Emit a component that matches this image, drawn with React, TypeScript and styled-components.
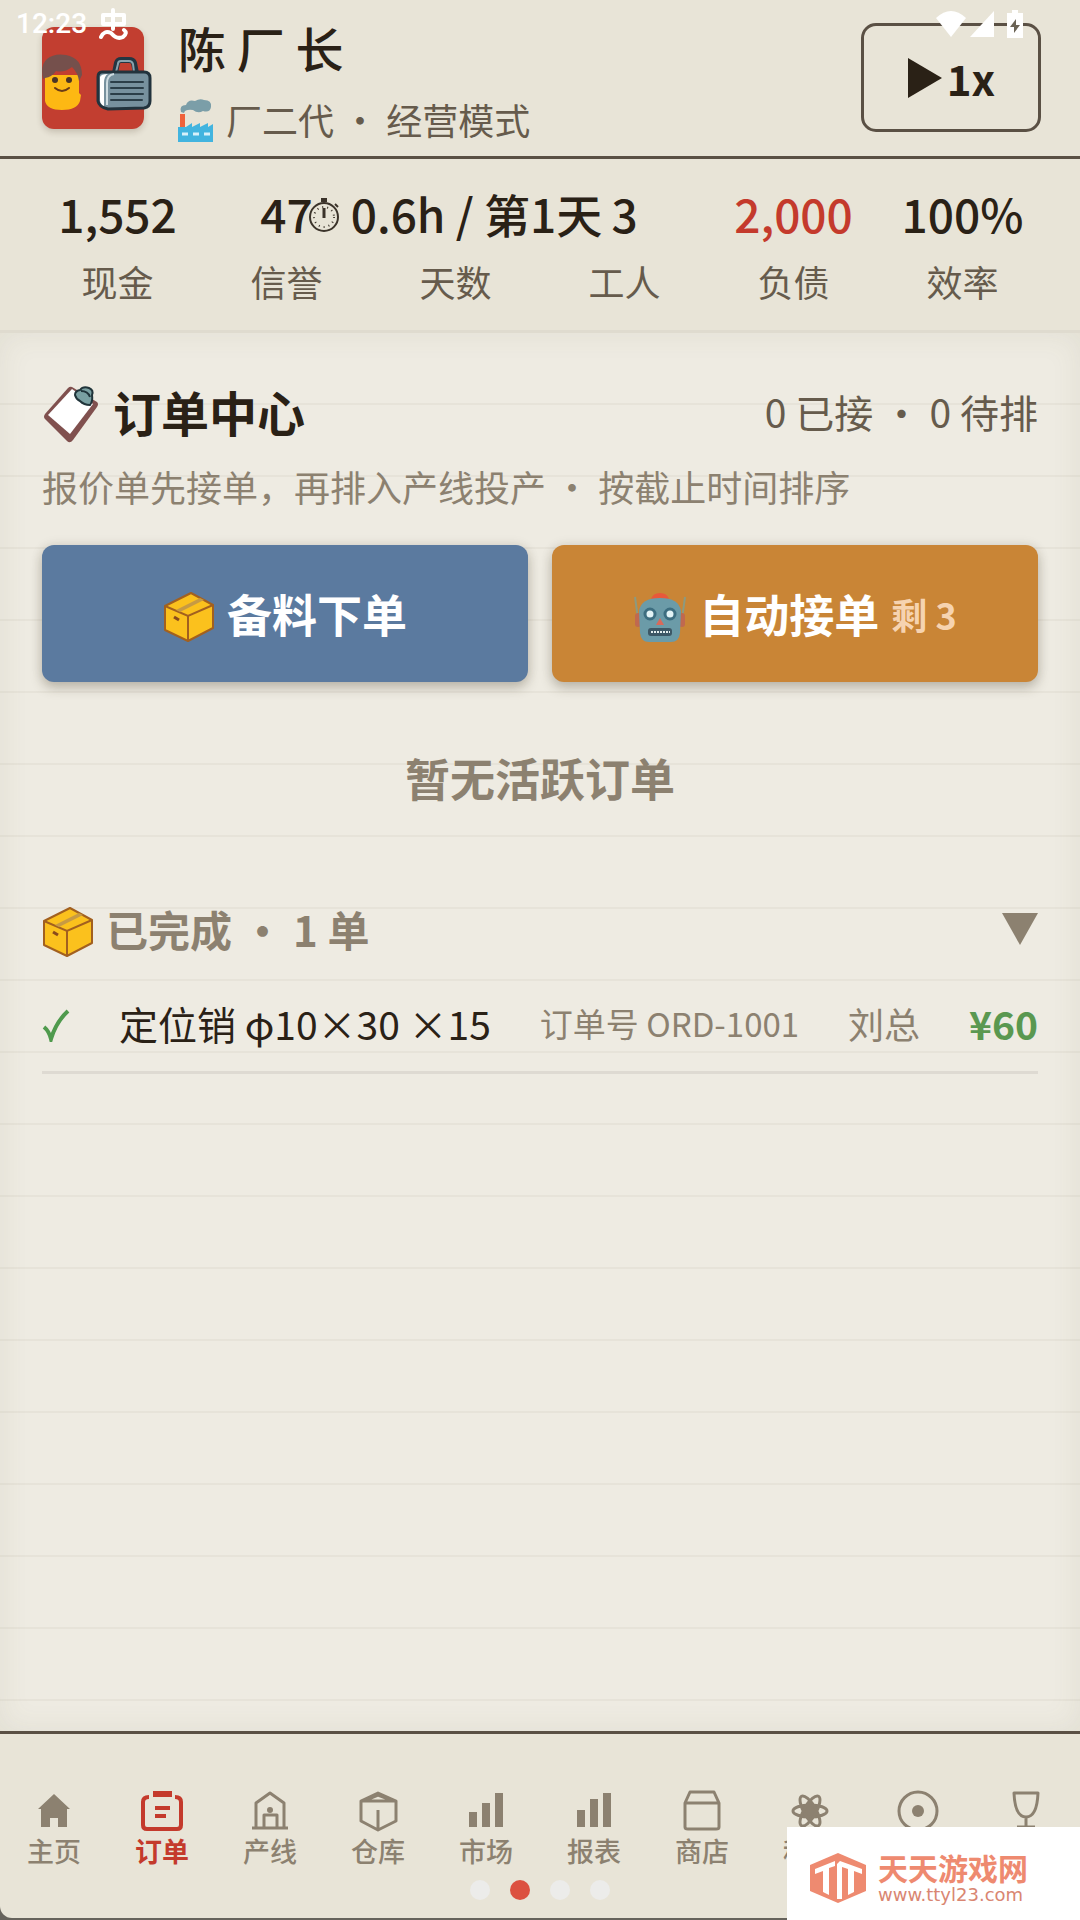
import React from "react";
import styled, { createGlobalStyle } from "styled-components";

const sans = '"Noto Sans CJK SC", "Noto Sans", sans-serif';
const ink = "#2a2116";
const inkSoft = "#665b4c";
const muted = "#8c8170";
const line = "#5a5044";
const red = "#c43a2c";

const GlobalStyle = createGlobalStyle`
  *, *::before, *::after { box-sizing: border-box; }
  body { margin: 0; background: #66635c; font-family: ${sans}; color: ${ink}; }
  button { font: inherit; color: inherit; background: none; border: 0; padding: 0; cursor: pointer; }
  h1, h2, p, ul { margin: 0; padding: 0; font-weight: inherit; }
  ul { list-style: none; }
  svg { display: block; flex: none; }
`;

const Page = styled.div`
  position: relative;
  display: flex;
  flex-direction: column;
  min-height: 100vh;
  padding-bottom: 2px;
  overflow: hidden;
`;

const StatusBar = styled.div`
  position: absolute;
  inset: 0 0 auto 0;
  z-index: 2;
  display: flex;
  align-items: center;
  justify-content: space-between;
  padding: 8px 48px 8px 16px;
  color: #fff;
  font: 500 28px/32px Roboto, sans-serif;
`;

const StatusGroup = styled.div<{ $gap: number }>`
  display: flex;
  align-items: center;
  gap: ${(p) => p.$gap}px;
`;

const Header = styled.header`
  display: flex;
  align-items: center;
  gap: 34px;
  padding: 12px 39px 13px 42px;
  background: #e8e4d7;
  border-bottom: 3px solid ${line};
`;

const Avatar = styled.div`
  display: flex;
  align-items: flex-end;
  gap: 14px;
  flex: none;
  width: 102px;
  height: 102px;
  padding-bottom: 18px;
  border-radius: 12px;
  background: #c23e30;
  box-shadow: 0 3px 6px rgba(60, 40, 20, 0.2);
`;

const Identity = styled.div`
  display: flex;
  flex-direction: column;
  gap: 13px;
  flex: 1;
`;

const PlayerName = styled.h1`
  font-size: 48px;
  line-height: 70px;
  font-weight: 500;
`;

const PlayerRole = styled.p`
  display: flex;
  align-items: center;
  gap: 12px;
  font-size: 36px;
  line-height: 48px;
  color: ${inkSoft};
`;

const SpeedButton = styled.button`
  display: flex;
  align-items: center;
  justify-content: center;
  gap: 4px;
  width: 180px;
  height: 109px;
  border: 3px solid ${line};
  border-radius: 15px;
  font-size: 42px;
  font-weight: 700;
  line-height: 48px;
`;

const Stats = styled.section`
  display: flex;
  padding: 22px 33px 27px;
  background: #e8e4d7;
  border-bottom: 3px solid #dfdbcf;
`;

const Stat = styled.div`
  display: flex;
  flex: 1 1 0;
  min-width: 0;
  flex-direction: column;
  align-items: center;
  gap: 14px;
  white-space: nowrap;
`;

const StatValue = styled.div<{ $danger?: boolean }>`
  display: flex;
  align-items: center;
  gap: 12px;
  font-size: 46px;
  line-height: 64px;
  font-weight: 500;
  color: ${(p) => (p.$danger ? red : ink)};
`;

const StatLabel = styled.div`
  font-size: 36px;
  line-height: 44px;
  color: ${inkSoft};
`;

const RuledPaper = styled.main`
  flex: 1;
  padding: 45px 42px;
  background-color: #eeebe2;
  background-image: linear-gradient(
    to bottom,
    transparent 70px,
    rgba(90, 80, 60, 0.05) 70px
  );
  background-size: 100% 72px;
  box-shadow: inset 0 0 30px rgba(100, 100, 50, 0.09);
`;

const TitleRow = styled.div`
  display: flex;
  align-items: center;
  justify-content: space-between;
  line-height: 60px;
`;

const Title = styled.h2`
  display: flex;
  align-items: center;
  gap: 13px;
  font-size: 48px;
  font-weight: 700;
`;

const Counts = styled.span`
  font-size: 39px;
  color: ${inkSoft};
`;

const Hint = styled.p`
  margin-top: 15px;
  font-size: 36px;
  line-height: 54px;
  color: ${muted};
`;

const Actions = styled.div`
  display: grid;
  grid-template-columns: 1fr 1fr;
  gap: 24px;
  margin-top: 32px;
`;

const ActionButton = styled.button<{ $color: string }>`
  display: flex;
  align-items: center;
  justify-content: center;
  gap: 12px;
  height: 137px;
  border-radius: 12px;
  background: ${(p) => p.$color};
  color: #fff;
  font-size: 45px;
  font-weight: 700;
  box-shadow: 0 6px 12px rgba(60, 50, 30, 0.25), 0 0 12px rgba(60, 50, 30, 0.1);
`;

const Remaining = styled.span`
  font-size: 36px;
  color: #f6d3b0;
`;

const Empty = styled.p`
  margin-top: 63px;
  font-size: 45px;
  line-height: 66px;
  font-weight: 700;
  text-align: center;
  color: ${muted};
`;

const DoneToggle = styled.button`
  display: flex;
  align-items: center;
  gap: 12px;
  width: 100%;
  margin-top: 88px;
  font-size: 42px;
  line-height: 60px;
  font-weight: 700;
  color: ${muted};

  & > svg:last-child { margin-left: auto; }
`;

const OrderList = styled.ul`
  margin-top: 20px;
`;

const OrderRow = styled.li`
  display: flex;
  align-items: center;
  justify-content: space-between;
  padding: 14px 0 18px;
  border-bottom: 3px solid #dedad2;
  line-height: 60px;
  white-space: nowrap;
`;

const OrderName = styled.span`
  font-size: 39px;
`;

const OrderMeta = styled.span<{ $size: number }>`
  font-size: ${(p) => p.$size}px;
  color: ${muted};
`;

const OrderPrice = styled.span`
  font-size: 39px;
  font-weight: 700;
  color: #5a9850;
`;

const Nav = styled.nav`
  display: flex;
  padding: 53px 0 49px;
  background: #e8e4d7;
  border-top: 3px solid ${line};
  border-radius: 0 0 12px 12px;
`;

const NavItem = styled.button<{ $active?: boolean }>`
  display: flex;
  flex: 1 1 0;
  flex-direction: column;
  align-items: center;
  height: 82px;
  font-size: 27px;
  line-height: 32px;
  font-weight: ${(p) => (p.$active ? 700 : 500)};
  color: ${(p) => (p.$active ? red : muted)};
`;

const Pager = styled.div`
  position: absolute;
  bottom: 20px;
  left: 50%;
  transform: translateX(-50%);
  display: flex;
  gap: 20px;
`;

const PagerDot = styled.span<{ $active?: boolean }>`
  width: 20px;
  height: 20px;
  border-radius: 50%;
  background: ${(p) => (p.$active ? "#dc5140" : "#ececea")};
`;

const SiteBadge = styled.a`
  position: absolute;
  right: 0;
  bottom: 0;
  display: flex;
  align-items: center;
  gap: 10px;
  width: 293px;
  height: 93px;
  padding-left: 21px;
  padding-top: 8px;
  background: #fff;
  color: #ee8a70;
  text-decoration: none;
`;

const SiteText = styled.span`
  display: flex;
  flex-direction: column;
`;

const SiteName = styled.span`
  font-size: 30px;
  line-height: 34px;
  font-weight: 700;
`;

const SiteUrl = styled.span`
  font: 18px/22px "DejaVu Sans", sans-serif;
  color: #d98672;
`;

const PersonEmoji = () => (
  <svg width="40" height="58" viewBox="0 0 40 58" aria-hidden="true">
    <path d="M3 30 V48 Q5 57 20 57 Q35 57 38 48 L39 42 L37 40 V22 H3Z" fill="#fdb813" />
    <path d="M1 26 Q-2 12 5 6 Q12 0 24 2 Q40 5 40 22 L37 28 Q36 20 30 14 Q22 20 14 18 Q10 24 3 25Z" fill="#75504c" />
    <circle cx="13" cy="27" r="3" fill="#4a3426" />
    <circle cx="27" cy="27" r="3" fill="#4a3426" />
    <path d="M13 35 Q20 41 27 35" fill="none" stroke="#6b3c17" strokeWidth="2" strokeLinecap="round" />
  </svg>
);

const CaseEmoji = () => (
  <svg width="56" height="54" viewBox="0 0 56 54" aria-hidden="true">
    <path d="M19 16 L21 6 Q22 3 25 3 H33 Q37 3 38 6 L40 16" fill="none" stroke="#243642" strokeWidth="6" />
    <path d="M20 15 L22 7 Q22 4 25 4 H33 Q36 4 37 7 L38 15" fill="none" stroke="#8aa3ae" strokeWidth="2" />
    <path d="M6 15 H48 Q54 15 54 21 V44 Q54 50 48 51 L12 52 Q3 50 2 44 V20 Q2 15 6 15Z" fill="#77919e" stroke="#22333d" strokeWidth="3" />
    <path d="M4 20 Q5 17 12 17 Q8 19 8 26 V49 Q4 47 4 43Z" fill="#fff" />
    <path d="M15 25 H47 M15 31 H47 M15 37 H47 M15 43 H46" stroke="#2b3e48" strokeWidth="2" strokeLinecap="round" />
    <path d="M11 48 V26 Q11 18 18 17" fill="none" stroke="#cfdde2" strokeWidth="2" />
  </svg>
);

const FactoryEmoji = () => (
  <svg width="36" height="48" viewBox="0 -4 36 48" aria-hidden="true">
    <path d="M3 13 Q1 6 8 6 Q10 0 17 2 Q22 -1 26 1 Q34 1 33 8 Q32 14 25 12 Q20 15 15 11 Q7 10 6 14Z" fill="#7b9ea8" />
    <rect x="2" y="15" width="5" height="14" fill="#f0623b" />
    <path d="M0 43 V28 H8 L14 24 V28 L22 24 V28 L30 24 V28 L35 25 V43Z" fill="#42b4df" />
    <path d="M4 35 H10 M15 35 H21 M26 35 H32" stroke="#d7f0fa" strokeWidth="3" />
  </svg>
);

const Stopwatch = () => (
  <svg width="30" height="40" viewBox="0 -4 30 40" aria-hidden="true" fill="none" stroke="#3b332a" strokeWidth="2">
    <circle cx="15" cy="20" r="14" />
    <circle cx="15" cy="20" r="10" strokeDasharray="1 4" />
    <path d="M12 3 H18" strokeWidth="4" />
    <path d="M26 7 L29 10" />
    <path d="M15 11 V21" strokeWidth="3" />
  </svg>
);

const ClipboardEmoji = () => (
  <svg width="58" height="66" viewBox="0 -8 58 66" aria-hidden="true">
    <path d="M30 1 L55 16 Q57 18 55 21 L31 54 Q28 58 25 55 L3 33 Q1 31 3 28 L26 2 Q28 0 30 1Z" fill="#80504e" />
    <path d="M30 3 L51 18 L28 48 L6 29Z" fill="#fff" />
    <path d="M33 9 Q33 5 38 4 Q41 0 47 2 Q52 4 50 9 Q51 15 48 19 Q42 19 38 15 Q34 13 33 9Z" fill="#7aa0a2" stroke="#20343a" strokeWidth="2" />
    <path d="M39 5 Q46 5 48 11" fill="none" stroke="#20343a" strokeWidth="2" />
  </svg>
);

const BoxEmoji = () => (
  <svg width="52" height="58" viewBox="0 -6 52 58" aria-hidden="true">
    <path d="M2 15 L28 2 L50 14 V37 L25 50 L2 39Z" fill="#fbc11d" stroke="#a2601f" strokeWidth="2" strokeLinejoin="round" />
    <path d="M2 15 L25 25 L50 14 M25 25 V50" fill="none" stroke="#a2601f" strokeWidth="2" />
    <path d="M13 19 L37 7 L41 9 L17 21Z" fill="#c79a43" />
    <path d="M11 26 L16 29" stroke="#8a4a1c" strokeWidth="3" />
  </svg>
);

const RobotEmoji = () => (
  <svg width="54" height="58" viewBox="0 -6 54 58" aria-hidden="true">
    <path d="M2 6 L5 28 M52 6 L49 28" stroke="#8c9a80" strokeWidth="2" />
    <rect x="2" y="22" width="6" height="14" rx="3" fill="#c0694f" />
    <rect x="46" y="22" width="6" height="14" rx="3" fill="#c0694f" />
    <path d="M18 8 Q20 2 27 2 Q34 2 36 8Z" fill="#e8583b" />
    <path d="M6 20 Q8 7 27 7 Q46 7 48 20 L47 42 Q46 51 38 51 H16 Q8 51 7 42Z" fill="#6b9ba8" />
    <circle cx="17" cy="23" r="5" fill="#e2f3f5" stroke="#3d6e80" strokeWidth="3" />
    <circle cx="37" cy="23" r="5" fill="#e2f3f5" stroke="#3d6e80" strokeWidth="3" />
    <path d="M27 27 L31 34 H23Z" fill="#d9695a" />
    <rect x="15" y="37" width="24" height="8" rx="3" fill="#3c5866" />
    <path d="M18 41 H37" stroke="#e5f0f0" strokeWidth="2" strokeDasharray="2 1" />
  </svg>
);

const LineIcon = ({ children }: { children: React.ReactNode }) => (
  <svg width="48" height="48" viewBox="0 0 48 48" fill="none" stroke="currentColor" strokeWidth="3" strokeLinejoin="round" aria-hidden="true">
    {children}
  </svg>
);

type NavEntry = { id: string; label?: string; active?: boolean; icon: React.ReactNode };

const navEntries: NavEntry[] = [
  {
    id: "主页",
    label: "主页",
    icon: <path d="M24 7 L40 22 H37 V40 H28 V31 H20 V40 H11 V22 H8Z" fill="currentColor" stroke="none" />,
  },
  {
    id: "订单",
    label: "订单",
    active: true,
    icon: (
      <>
        <path d="M11 10 Q5 10 5 15 V38 Q5 42 9 42 H39 Q43 42 43 38 V15 Q43 10 37 10" strokeWidth="4" />
        <path d="M15 7 H34" strokeWidth="6" />
        <path d="M17 21 H32 M17 29 H28" strokeWidth="4" />
      </>
    ),
  },
  {
    id: "产线",
    label: "产线",
    icon: (
      <>
        <path d="M6 41 H42 M10 41 V16 L24 6 L38 16 V41 M18 41 V28 H31 V41" />
        <circle cx="24" cy="23" r="3" fill="currentColor" stroke="none" />
      </>
    ),
  },
  {
    id: "仓库",
    label: "仓库",
    icon: <path d="M24 6 L42 14 V34 L24 43 L7 34 V14Z M7 14 H42 M12 13 L24 8 L37 13 M24 23 V43" />,
  },
  {
    id: "市场",
    label: "市场",
    icon: <path d="M11 40 V25 M24 40 V16 M37 40 V6" strokeWidth="8" />,
  },
  {
    id: "报表",
    label: "报表",
    icon: <path d="M11 40 V23 M24 40 V12 M37 40 V6" strokeWidth="8" />,
  },
  {
    id: "商店",
    label: "商店",
    icon: <path d="M7 16 L12 5 H36 L41 16 V40 Q41 42 38 42 H10 Q7 42 7 40Z M7 16 H41" />,
  },
  {
    id: "科技",
    label: "科技",
    icon: (
      <>
        <circle cx="24" cy="24" r="8" fill="currentColor" stroke="none" />
        <ellipse cx="24" cy="24" rx="17" ry="6" />
        <ellipse cx="24" cy="24" rx="17" ry="6" transform="rotate(60 24 24)" />
        <ellipse cx="24" cy="24" rx="17" ry="6" transform="rotate(120 24 24)" />
      </>
    ),
  },
  {
    id: "目标",
    icon: (
      <>
        <circle cx="24" cy="24" r="19" />
        <circle cx="24" cy="24" r="6" fill="currentColor" stroke="none" />
      </>
    ),
  },
  {
    id: "成就",
    icon: <path d="M12 6 H36 Q35 30 24 30 Q13 30 12 6Z M24 30 V40 M15 40 H33" />,
  },
];

const stats: { label: string; value: React.ReactNode; danger?: boolean }[] = [
  { label: "现金", value: "1,552" },
  { label: "信誉", value: "47" },
  { label: "天数", value: <><Stopwatch />0.6h / 第1天</> },
  { label: "工人", value: "3" },
  { label: "负债", value: "2,000", danger: true },
  { label: "效率", value: "100%" },
];

export default function App() {
  return (
    <Page>
      <GlobalStyle />
      <StatusBar>
        <StatusGroup $gap={12}>
          <span>12:23</span>
          <svg width="30" height="32" viewBox="0 0 30 32" fill="none" stroke="#fff" strokeWidth="4" strokeLinejoin="round" strokeLinecap="round" aria-hidden="true">
            <path d="M14 2 V21 M4 7 H25 V16 H4Z" />
            <path d="M2 29 Q5 22 12 25 Q18 32 24 29 Q29 25 25 22" />
          </svg>
        </StatusGroup>
        <StatusGroup $gap={4}>
          <svg width="30" height="26" viewBox="0 0 30 26" fill="#fff" aria-hidden="true">
            <path d="M0 7 Q15 -7 30 7 L15 26Z" />
          </svg>
          <svg width="24" height="26" viewBox="0 0 24 26" fill="#fff" aria-hidden="true">
            <path d="M24 0 V26 H0Z" />
          </svg>
          <svg width="34" height="28" viewBox="0 0 34 28" aria-hidden="true">
            <path d="M9 3 H14 V0 H20 V3 H25 V28 H9Z" fill="#fff" />
            <path d="M18 9 L12 17 H16 V23 L22 15 H18Z" fill="#6b6355" />
          </svg>
        </StatusGroup>
      </StatusBar>

      <Header>
        <Avatar>
          <PersonEmoji />
          <CaseEmoji />
        </Avatar>
        <Identity>
          <PlayerName>陈 厂 长</PlayerName>
          <PlayerRole>
            <FactoryEmoji />
            <span>厂二代 · 经营模式</span>
          </PlayerRole>
        </Identity>
        <SpeedButton type="button">
          <svg width="36" height="40" viewBox="0 0 36 40" fill={ink} aria-hidden="true">
            <path d="M1 0 L35 20 L1 40Z" />
          </svg>
          1x
        </SpeedButton>
      </Header>

      <Stats>
        {stats.map((s) => (
          <Stat key={s.label}>
            <StatValue $danger={s.danger}>{s.value}</StatValue>
            <StatLabel>{s.label}</StatLabel>
          </Stat>
        ))}
      </Stats>

      <RuledPaper>
        <TitleRow>
          <Title>
            <ClipboardEmoji />
            订单中心
          </Title>
          <Counts>0 已接 · 0 待排</Counts>
        </TitleRow>
        <Hint>报价单先接单，再排入产线投产 · 按截止时间排序</Hint>
        <Actions>
          <ActionButton type="button" $color="#5b7a9f">
            <BoxEmoji />
            备料下单
          </ActionButton>
          <ActionButton type="button" $color="#c98536">
            <RobotEmoji />
            自动接单
            <Remaining>剩 3</Remaining>
          </ActionButton>
        </Actions>
        <Empty>暂无活跃订单</Empty>
        <DoneToggle type="button">
          <BoxEmoji />
          <span>已完成 · 1 单</span>
          <svg width="36" height="32" viewBox="0 0 36 32" fill={muted} aria-hidden="true">
            <path d="M0 0 H36 L18 32Z" />
          </svg>
        </DoneToggle>
        <OrderList>
          <OrderRow>
            <svg width="28" height="38" viewBox="0 -4 28 38" fill="none" stroke="#4f9a4d" aria-hidden="true">
              <path d="M2 19 Q7 23 9 31 Q14 14 26 3" strokeWidth="4" />
            </svg>
            <OrderName>定位销 φ10×30 ×15</OrderName>
            <OrderMeta $size={33}>订单号 ORD-1001</OrderMeta>
            <OrderMeta $size={36}>刘总</OrderMeta>
            <OrderPrice>¥60</OrderPrice>
          </OrderRow>
        </OrderList>
      </RuledPaper>

      <Nav>
        {navEntries.map((n) => (
          <NavItem key={n.id} type="button" $active={n.active} aria-label={n.label ? undefined : n.id}>
            <LineIcon>{n.icon}</LineIcon>
            {n.label}
          </NavItem>
        ))}
      </Nav>

      <Pager>
        <PagerDot />
        <PagerDot $active />
        <PagerDot />
        <PagerDot />
      </Pager>

      <SiteBadge href="#">
        <svg width="60" height="52" viewBox="0 0 60 52" aria-hidden="true">
          <path d="M30 1 L58 13 V39 L30 51 L2 39 V13Z" fill="#ee8a70" />
          <path d="M7 17 L27 9 V14 L21 16 V43 L15 40 V19 L7 22Z" fill="#fff" />
          <path d="M32 9 L54 17 V22 L46 19 V40 L40 43 V17 L34 15 V47 H29 V12Z" fill="#fff" />
        </svg>
        <SiteText>
          <SiteName>天天游戏网</SiteName>
          <SiteUrl>www.ttyl23.com</SiteUrl>
        </SiteText>
      </SiteBadge>
    </Page>
  );
}
